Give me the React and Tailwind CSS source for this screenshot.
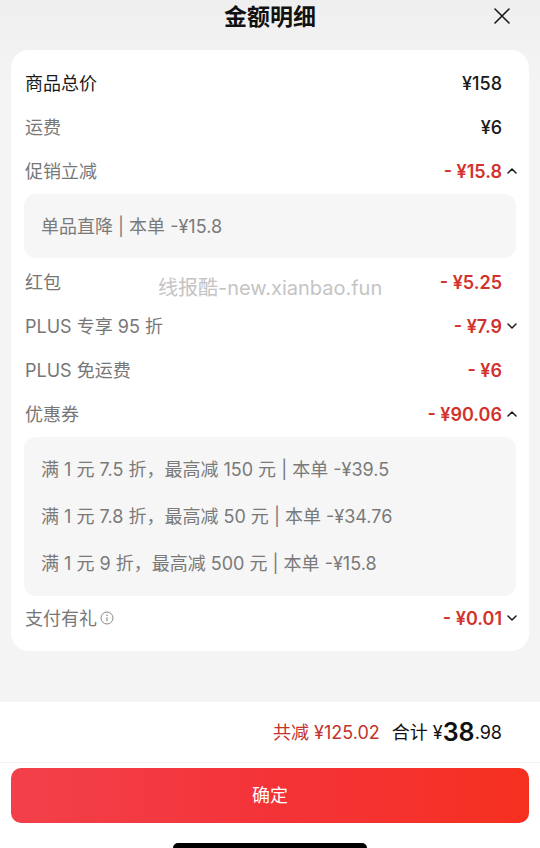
const font = { fontFamily: 'Inter, "Noto Sans CJK SC", sans-serif' }

const Chevron = ({ up }) => (
  <svg width="10" height="6" viewBox="0 0 10 6" className="ml-[5px] shrink-0">
    <path
      d={up ? 'M1 5 L5 1 L9 5' : 'M1 1 L5 5 L9 1'}
      fill="none"
      stroke="#1a1a1a"
      strokeWidth="1.5"
      strokeLinecap="round"
      strokeLinejoin="round"
    />
  </svg>
)

const Row = ({ label, value, red, chevron, dark, info }) => (
  <div className="h-[44px] flex items-center justify-between pl-[14px] pr-[12px]">
    <div className={`flex items-center text-[18px] ${dark ? 'text-[#1a1a1a]' : 'text-[#777777]'}`}>
      {label}
      {info && (
        <svg width="14" height="14" viewBox="0 0 14 14" className="ml-[3px]">
          <circle cx="7" cy="7" r="6" fill="none" stroke="#8a8a8a" strokeWidth="1" />
          <circle cx="7" cy="4.2" r="0.8" fill="#8a8a8a" />
          <path d="M7 6.2 V10.2" stroke="#8a8a8a" strokeWidth="1.1" />
        </svg>
      )}
    </div>
    <div className="flex items-center">
      <span className={`text-[18px] ${red ? 'text-[#d2322b] font-semibold' : 'text-[#1a1a1a] font-medium'}`}>
        {value}
      </span>
      <span className="w-[15px] flex justify-end">{chevron && <Chevron up={chevron === 'up'} />}</span>
    </div>
  </div>
)

const SubBox = ({ lines, className }) => (
  <div className={`mx-[13px] rounded-[12px] bg-[#f6f6f6] pl-[17px] text-[18px] text-[#7a7a7a] ${className}`}>
    {lines.map(l => (
      <div key={l} className="h-[47px] flex items-center">{l}</div>
    ))}
  </div>
)

export default function App() {
  return (
    <div style={font} className="w-[540px] h-[848px] flex flex-col bg-[#f4f4f4] overflow-hidden">
      <div className="bg-gradient-to-b from-[#efefef] to-[#f4f4f4] to-[90px]">
        <header className="relative h-[36px] flex items-center justify-center">
          <h1 className="text-[23px] font-bold text-[#111111] leading-none -mt-[2px]">金额明细</h1>
          <svg width="18" height="18" viewBox="0 0 18 18" className="absolute right-[29px] top-[7px]">
            <path d="M2 2 L16 16 M16 2 L2 16" stroke="#1a1a1a" strokeWidth="1.6" strokeLinecap="round" />
          </svg>
        </header>

        <div className="px-[11px] pt-[14px]">
          <section className="relative bg-white rounded-[18px] pt-[11px] pb-[11px]">
            <Row label="商品总价" value="¥158" dark />
            <Row label="运费" value="¥6" />
            <Row label="促销立减" value="- ¥15.8" red chevron="up" />
            <div className="mx-[13px] mt-px h-[64px] rounded-[12px] bg-[#f6f6f6] pl-[17px] text-[18px] text-[#7a7a7a] flex items-center">
              单品直降 | 本单 -¥15.8
            </div>
            <div className="h-[2px]" />
            <Row label="红包" value="- ¥5.25" red />
            <Row label="PLUS 专享 95 折" value="- ¥7.9" red chevron="down" />
            <Row label="PLUS 免运费" value="- ¥6" red />
            <Row label="优惠券" value="- ¥90.06" red chevron="up" />
            <SubBox
              className="mt-px py-[9px]"
              lines={[
                '满 1 元 7.5 折，最高减 150 元 | 本单 -¥39.5',
                '满 1 元 7.8 折，最高减 50 元 | 本单 -¥34.76',
                '满 1 元 9 折，最高减 500 元 | 本单 -¥15.8',
              ]}
            />
            <Row label="支付有礼" value="- ¥0.01" red chevron="down" info />
            <div className="absolute left-[147px] top-[223px] text-[20px] text-[#c4c4c4] pointer-events-none">
              线报酷-new.xianbao.fun
            </div>
          </section>
        </div>
      </div>

      <div className="flex-1" />

      <footer className="h-[146px] bg-white flex flex-col">
        <div className="h-[61px] flex items-center justify-end pr-[38px] border-b border-[#f1f1f1]">
          <span className="text-[18px] text-[#c2332c]">共减 ¥125.02</span>
          <span className="ml-[12px] text-[18px] text-[#111111]">合计 ¥</span>
          <span className="text-[25px] font-semibold text-[#111111] leading-none">38</span>
          <span className="text-[18px] text-[#111111]">.98</span>
        </div>
        <div className="px-[11px] pt-[5px]">
          <button className="w-full h-[55px] rounded-[10px] bg-gradient-to-r from-[#f2404a] via-[#f43338] to-[#f5301f] text-white text-[18px]">
            确定
          </button>
        </div>
        <div className="flex-1" />
        <div className="flex justify-center">
          <div className="w-[194px] h-[5px] rounded-t-full bg-black" />
        </div>
      </footer>
    </div>
  )
}
